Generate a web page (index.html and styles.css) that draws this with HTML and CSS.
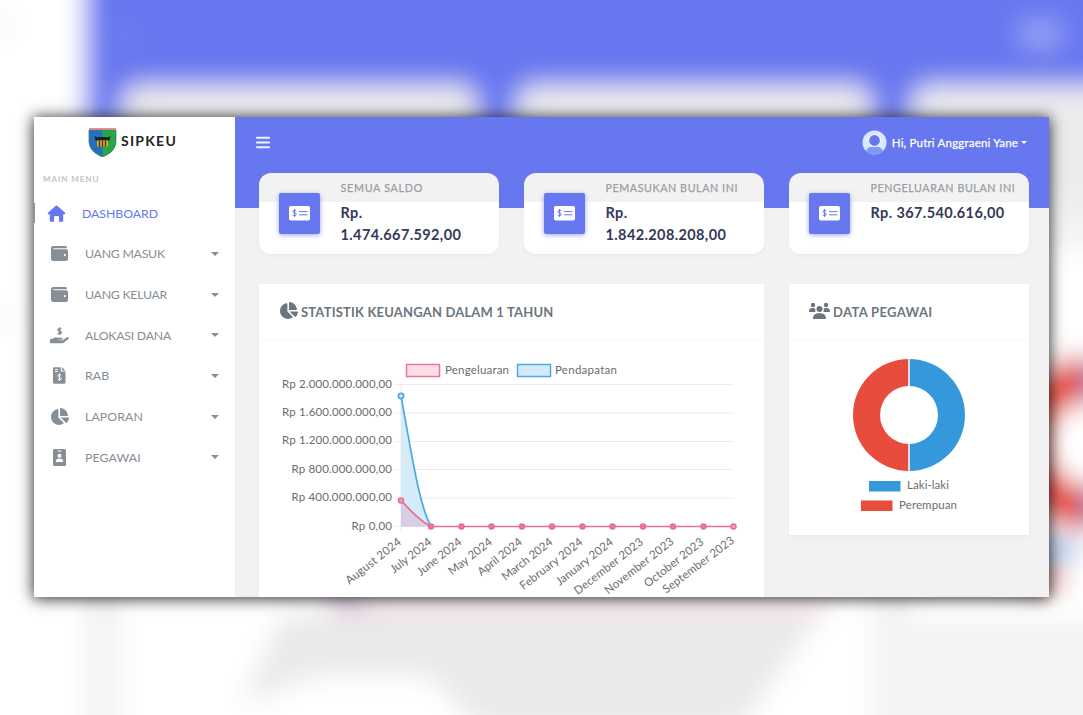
FILE: index.html
```html
<!DOCTYPE html>
<html lang="id">
<head>
<meta charset="utf-8">
<title>SIPKEU</title>
<link rel="stylesheet" href="styles.css">
</head>
<body>
<svg class="backdrop" viewBox="178 117 727 480" preserveAspectRatio="none" aria-hidden="true">
  <defs><filter id="soft" x="-10%" y="-10%" width="120%" height="120%"><feGaussianBlur stdDeviation="8.500"/></filter></defs>
  <g filter="url(#soft)">
    <rect x="100" y="50" width="900" height="620" fill="#f3f3f3"/>
    <rect x="100" y="50" width="135" height="620" fill="#fff"/>
    <rect x="235" y="50" width="800" height="158" fill="#6777ef"/>
    <rect x="260" y="174" width="238" height="81" rx="12" fill="#ececee"/>
    <rect x="525" y="174" width="238" height="81" rx="12" fill="#ececee"/>
    <rect x="790" y="174" width="240" height="81" rx="12" fill="#ececee"/>
    <rect x="259" y="284" width="505" height="400" fill="#fff"/>
    <rect x="789" y="284" width="240" height="251" fill="#fff"/>
    <path d="M863 140H890" stroke="#98a4f4" stroke-width="18"/>
    <path d="M257 142h12" stroke="#808df2" stroke-width="6"/>
    <path d="M400 526H735" stroke="#e8809b" stroke-width="3"/>
    <path d="M400 500L431 526H400z" fill="#d9c7e2"/>
    <path d="M368 530H728L675 605H500L465 570H390L340 590z" fill="#e9e9e9"/>
    <path d="M909 359a56 56 0 0 1 0 112V444a29 29 0 0 0 0-58z" fill="#3498db"/>
    <path d="M909 357a58 58 0 0 0 0 116V443a28 28 0 0 1 0-56z" fill="#e74c3c"/>
    <rect x="869" y="481" width="31.500" height="10.500" fill="#3498db"/>
    <rect x="861" y="500.500" width="31.500" height="10.500" fill="#e74c3c"/>
    <path d="M178 135h3M178 330h3" stroke="#999" stroke-width="8"/>
  </g>
</svg>

<svg class="defs" aria-hidden="true">
  <symbol id="wallet" viewBox="0 0 512 512"><path d="M461 128H80c-9 0-16-7-16-16s7-16 16-16h384c9 0 16-7 16-16 0-27-21-48-48-48H64C29 32 0 61 0 96v320c0 35 29 64 64 64h397c28 0 51-22 51-48V176c0-26-23-48-51-48zM416 336a32 32 0 1 1 0-64 32 32 0 0 1 0 64z"/></symbol>
  <symbol id="pie" viewBox="0 0 544 512"><path d="M528 288H291l158 158c6 6 16 6 22 1 39-37 65-86 73-141 1-10-7-18-16-18zm-16-65C504 104 408 8 289 0c-9-1-17 7-17 16v224h224c9 0 17-8 16-17zM224 288V51c0-10-8-17-18-16C87 51-4 156 0 280c5 129 115 234 243 232 50-1 97-17 135-44 8-6 9-17 2-24z"/></symbol>
  <symbol id="check" viewBox="0 0 21 15"><rect width="21" height="14.500" rx="1.800" fill="#fff"/><path d="M7.200 4.700C5.900 3.900 4 4.200 4 5.600c0 1.700 3.300 1 3.300 2.700 0 1.500-2.300 1.600-3.600.7M5.600 3v8M10 5.600h8.500M10 8.800h8.500" fill="none" stroke="#6777ef" stroke-width="1"/></symbol>
</svg>

<div class="panel">
  <aside class="sidebar">
    <div class="brand">
      <svg width="29" height="29" viewBox="0 0 29 29"><path d="M1 2h27v11c0 8-6 13-13.500 16C7 26 1 21 1 13z" fill="#2470bd"/><path d="M14.500 2H28v11c0 8-6 13-13.500 16z" fill="#28a745"/><path d="M1 2h27v11c0 8-6 13-13.500 16C7 26 1 21 1 13z" fill="none" stroke="#477c76" stroke-width=".8"/><path d="M1 1h27" stroke="#dd7679" stroke-width="1.600"/><path d="M6.500 8c2 1.500 4 1.500 5 1h6c1 .5 3 .5 5-1l-1 4.500h-14z" fill="#17241d"/><path d="M9 12.500h11v6H9z" fill="#d6a72e"/><path d="M11.500 12.500v6M14.500 12.500v6M17.500 12.500v6" stroke="#3d301b" stroke-width="1.200"/></svg>
      <span>SIPKEU</span>
    </div>
    <div class="menu-title">MAIN MENU</div>
    <nav>
      <a class="item active"><svg class="ico home" width="19" height="17" viewBox="0 0 20 18"><path d="M9.200.8a1.200 1.200 0 0 1 1.600 0l8 7.100c1 .9.500 2-.7 2h-1v6.400c0 .8-.6 1.400-1.400 1.400H12.600V12.600c0-.6-.4-1-1-1H8.400c-.6 0-1 .4-1 1v5.100H4.300c-.8 0-1.400-.6-1.400-1.400V9.900h-1c-1.200 0-1.700-1.100-.7-2z"/></svg><span>DASHBOARD</span></a>
      <a class="item"><svg class="ico" width="17" height="17"><use href="#wallet"/></svg><span class="tight">UANG MASUK</span><i></i></a>
      <a class="item"><svg class="ico" width="17" height="17"><use href="#wallet"/></svg><span class="tight">UANG KELUAR</span><i></i></a>
      <a class="item"><svg class="ico" width="19" height="17" viewBox="0 0 19 17"><path d="M0 12h2.500C4 10.500 6 10.300 8 10.800h3.500c1.400 0 1.200 1.900 0 1.900H8.500v.5h4l4.200-2.800c1.500-.8 2.800.5 1.700 1.600L14 15.600c-.6.5-1 .7-2 .7H0z"/><path d="M11.300 2.200C10.200 1.400 8 1.500 8 3c0 1.600 3.300.9 3.300 2.600 0 1.500-2.300 1.600-3.600.7M9.600.3v7.400" fill="none" stroke="currentColor" stroke-width="1.500"/></svg><span class="tight">ALOKASI DANA</span><i></i></a>
      <a class="item"><svg class="ico" width="13" height="17" viewBox="0 0 13 17"><path d="M1.300.3h6.500v4.200h4.700v11c0 .8-.5 1.200-1.200 1.200h-10c-.8 0-1.300-.5-1.300-1.200v-14C0 .8.500.3 1.300.3zM9 .3l3.500 3.200H9z"/><path d="M2 2.500h3M2 4.500h3M8.200 8.100C6.900 7.300 4.900 7.400 4.900 8.800c0 1.700 3.400 1.200 3.400 2.800 0 1.500-2.300 1.500-3.700.7M6.500 6.400v7.500" fill="none" stroke="#fff" stroke-width="1"/></svg><span>RAB</span><i></i></a>
      <a class="item"><svg class="ico" width="18" height="17"><use href="#pie"/></svg><span>LAPORAN</span><i></i></a>
      <a class="item"><svg class="ico" width="13" height="17" viewBox="0 0 13 17"><rect width="13" height="17" rx="1.500"/><path d="M4.500 2h4" stroke="#fff"/><circle cx="6.500" cy="6.700" r="2" fill="#fff"/><path d="M2.800 13c0-2.400 1.300-3.400 3.700-3.400s3.700 1 3.700 3.400z" fill="#fff"/></svg><span>PEGAWAI</span><i></i></a>
    </nav>
  </aside>

  <main class="main">
    <header class="topbar">
      <svg width="14" height="13" viewBox="0 0 14 13"><path d="M1 1.800h12M1 6.500h12M1 11.200h12" stroke="#eef0ff" stroke-width="2.100" stroke-linecap="round"/></svg>
      <div class="user">
        <svg width="25" height="25" viewBox="0 0 25 25"><circle cx="12.500" cy="12.500" r="12" fill="#d9e7ff"/><path d="M4 21.500c1-4 4-5 8.500-5s7.500 1 8.500 5c-5 4-12 4-17 0z" fill="#7f9af6"/><circle cx="12.500" cy="10.500" r="6" fill="#6777ef" stroke="#f0f5ff" stroke-width="1.200"/></svg>
        <span>Hi, Putri Anggraeni Yane</span><i></i>
      </div>
    </header>
    <section class="stats">
      <article class="stat"><div class="badge"><svg width="21" height="15"><use href="#check"/></svg></div><div class="info"><h4 class="l1">SEMUA SALDO</h4><p>Rp.<br>1.474.667.592,00</p></div></article>
      <article class="stat"><div class="badge"><svg width="21" height="15"><use href="#check"/></svg></div><div class="info"><h4 class="l2">PEMASUKAN BULAN INI</h4><p>Rp.<br>1.842.208.208,00</p></div></article>
      <article class="stat"><div class="badge"><svg width="21" height="15"><use href="#check"/></svg></div><div class="info"><h4 class="l3">PENGELUARAN BULAN INI</h4><p>Rp. 367.540.616,00</p></div></article>
    </section>
    <section class="charts">
      <article class="card wide">
        <h3><svg width="18" height="17"><use href="#pie"/></svg><span>STATISTIK KEUANGAN DALAM 1 TAHUN</span></h3>
        <svg class="plot" width="505" height="256" viewBox="259 341 505 256">
          <path d="M394 384.500H734M394 413H734M394 441.500H734M394 469.500H734M394 498H734M394 526.500H734M401 384V533" stroke="#ececec" fill="none"/>
          <rect x="406.500" y="364.500" width="33" height="12" fill="#ffdfe6" stroke="#e87896" stroke-width="1.500"/>
          <rect x="517.500" y="364.500" width="33" height="12" fill="#d3eafa" stroke="#4daadd" stroke-width="1.500"/>
          <g class="lab">
            <text x="445" y="374" textLength="64">Pengeluaran</text><text x="555" y="374" textLength="62">Pendapatan</text>
            <text x="282" y="387.500" textLength="110">Rp 2.000.000.000,00</text>
            <text x="282" y="415.500" textLength="110">Rp 1.600.000.000,00</text>
            <text x="282" y="444" textLength="110">Rp 1.200.000.000,00</text>
            <text x="291.500" y="472.500" textLength="100.500">Rp 800.000.000,00</text>
            <text x="291.500" y="501" textLength="100.500">Rp 400.000.000,00</text>
            <text x="351.500" y="529.500" textLength="40.500">Rp 0,00</text>
          </g>
          <path d="M401 396C412 455 419 505 431 526.500H401z" fill="#cce7f8" fill-opacity=".85"/>
          <path d="M401 396C412 455 419 505 431 526.500" fill="none" stroke="#4daadd" stroke-width="1.700"/>
          <path d="M401 500.500C411 511 420 521 431 526.500H401z" fill="#dd9fc5" fill-opacity=".4"/>
          <path d="M401 500.500C411 511 420 521 431 526.500H734" fill="none" stroke="#e3708f" stroke-width="1.700"/>
          <circle cx="401" cy="396" r="2.600" fill="#d3eafa" stroke="#4daadd" stroke-width="1.700"/>
          <g fill="#e67b97" stroke="#e3708f" stroke-width="1.500"><circle cx="401" cy="500.500" r="2.500" fill="#f0a0b4"/><circle cx="431" cy="526.500" r="2.500"/><circle cx="461.500" cy="526.500" r="2.500"/><circle cx="491.500" cy="526.500" r="2.500"/><circle cx="522" cy="526.500" r="2.500"/><circle cx="552" cy="526.500" r="2.500"/><circle cx="582.500" cy="526.500" r="2.500"/><circle cx="612.500" cy="526.500" r="2.500"/><circle cx="643" cy="526.500" r="2.500"/><circle cx="673" cy="526.500" r="2.500"/><circle cx="703.500" cy="526.500" r="2.500"/><circle cx="733.500" cy="526.500" r="2.500" fill="#f0a0b4"/></g>
          <g class="lab end">
            <text transform="translate(402 543.500) rotate(-38)" textLength="67">August 2024</text>
            <text transform="translate(432.500 543.500) rotate(-38)" textLength="49">July 2024</text>
            <text transform="translate(462.500 543.500) rotate(-38)" textLength="53">June 2024</text>
            <text transform="translate(493 543.500) rotate(-38)" textLength="52">May 2024</text>
            <text transform="translate(523 543.500) rotate(-38)" textLength="53">April 2024</text>
            <text transform="translate(553.500 543.500) rotate(-38)" textLength="61">March 2024</text>
            <text transform="translate(583.500 543.500) rotate(-38)" textLength="76">February 2024</text>
            <text transform="translate(614 543.500) rotate(-38)" textLength="69">January 2024</text>
            <text transform="translate(644 543.500) rotate(-38)" textLength="84">December 2023</text>
            <text transform="translate(674.500 543) rotate(-38)" textLength="84">November 2023</text>
            <text transform="translate(704.500 543.500) rotate(-38)" textLength="72">October 2023</text>
            <text transform="translate(735 542) rotate(-37)" textLength="86">September 2023</text>
          </g>
        </svg>
      </article>
      <article class="card staff">
        <h3><svg width="21" height="18" viewBox="0 0 21 18"><circle cx="4" cy="3" r="2.200"/><circle cx="17" cy="3" r="2.200"/><circle cx="10.500" cy="7" r="3"/><path d="M0 10c0-3 1-4 3.500-4 1.500 0 2.500.4 3 1.400-.5 1-.2 1.800.1 2.600zM21 10c0-3-1-4-3.500-4-1.500 0-2.500.4-3 1.400.5 1 .2 1.800-.1 2.600zM4 17c0-4 2-5.700 6.500-5.700S17 13 17 17z"/></svg><span>DATA PEGAWAI</span></h3>
        <svg class="plot" width="240" height="194" viewBox="789 341 240 194">
          <path d="M909 359a56 56 0 0 1 0 112V444a29 29 0 0 0 0-58z" fill="#3498db"/>
          <path d="M909 359a56 56 0 0 0 0 112V444a29 29 0 0 1 0-58z" fill="#e74c3c"/>
          <path d="M909 358V387M909 443V472" stroke="#fff" stroke-width="1.500"/>
          <rect x="869" y="481" width="31.500" height="10.500" fill="#3498db"/><rect x="861" y="500.500" width="31.500" height="10.500" fill="#e74c3c"/>
          <g class="lab"><text x="907" y="489" textLength="42">Laki-laki</text><text x="899" y="508.500" textLength="58">Perempuan</text></g>
        </svg>
      </article>
    </section>
  </main>
</div>
</body>
</html>
```
FILE: styles.css
```css
* { box-sizing: border-box; }
body { margin: 0; width: 1083px; height: 715px; overflow: hidden; padding: 117px 34px 0; font-family: Lato, "Noto Sans", sans-serif; color: #6c757d; }
h3, h4, p { margin: 0; }
svg { display: block; flex: none; fill: currentColor; }
.defs { position: absolute; width: 0; height: 0; }
.backdrop { position: absolute; left: 0; top: 0; width: 1083px; height: 715px; z-index: -1; }
.panel { display: flex; width: 1015px; height: 480px; overflow: hidden; background: #f2f2f2; box-shadow: 0 1px 14px 1px rgba(0,0,0,.8); }

.sidebar { width: 201px; flex: none; background: #fff; }
.brand { display: flex; align-items: center; gap: 4px; height: 50px; padding: 0 0 0 54px; color: #212529; font-size: 14px; font-weight: 700; letter-spacing: 1.25px; }
.brand span { margin-top: -4px; }
.menu-title { height: 26px; padding: 7px 0 0 9px; font-size: 8px; line-height: 10px; font-weight: 700; letter-spacing: .95px; color: #c0c4c8; }
.item { display: grid; grid-template-columns: 51px 1fr 8px; align-items: center; height: 40.650px; padding-right: 16px; font-size: 12.300px; letter-spacing: .1px; color: #868e96; }
.ico { margin: 0 auto; }
.item span { white-space: nowrap; }
.item .tight { letter-spacing: -.25px; }
.item i { width: 0; height: 0; border: 4px solid transparent; border-top-color: currentColor; border-bottom: 0; }
.user i { width: 0; height: 0; border: 3.500px solid transparent; border-top-color: currentColor; border-bottom: 0; }
.active { grid-template-columns: 48px 1fr; color: #6777ef; letter-spacing: -.05px; background: linear-gradient(#8d8d9b, #8d8d9b) 0 50% / 1px 20px no-repeat; }
.active .home { margin-left: 13px; }

.main { flex: 1; padding: 0 20px 0 24px; background: linear-gradient(#6777ef 91px, #f2f2f2 91px); }
.topbar { display: flex; align-items: center; justify-content: space-between; height: 56px; padding: 0 2px 5px 0; margin-left: -3px; color: #fff; }
.user { display: flex; align-items: center; gap: 5px; font-size: 11.500px; letter-spacing: .19px; white-space: nowrap; -webkit-text-stroke: .25px; }
.user i { margin-left: -2px; }

.stats { display: grid; grid-template-columns: repeat(3, 240px); gap: 25px; }
.stat { display: flex; gap: 20px; height: 81px; padding-left: 20px; border-radius: 12px; background: linear-gradient(#f2f2f2 29px, #fff 29px); box-shadow: 0 2px 4px rgba(0,0,0,.035); }
.badge { width: 41px; height: 41px; margin-top: 20px; padding: 13px 10px; border-radius: 2px; background: #6777ef; box-shadow: 0 1px 5px #9aa6f5; }
.info { padding-top: 8px; margin-left: .5px; white-space: nowrap; }
.info h4 { height: 21px; font-size: 10.700px; line-height: 13px; font-weight: 400; color: #98a0a7; -webkit-text-stroke: .25px; }
.l1 { letter-spacing: .75px; }
.l2 { letter-spacing: .6px; }
.l3 { letter-spacing: .6px; }
.info p { color: #343957; font-size: 14.500px; line-height: 21.500px; font-weight: 700; letter-spacing: .38px; }

.charts { display: grid; grid-template-columns: 505px 240px; gap: 25px; margin-top: 30px; }
.card { background: #fff; box-shadow: 0 2px 5px rgba(0,0,0,.035); }
.wide { height: 313px; }
.staff { height: 251px; }
.card h3 { display: flex; align-items: center; gap: 3px; height: 57px; padding: 0 20px 3px; border-bottom: 1px solid #f7f7f7; font-size: 13px; font-weight: 700; letter-spacing: .18px; white-space: nowrap; }
.wide h3 { padding-left: 21px; }
.card h3 span { padding-top: 2px; }
.staff h3 { letter-spacing: .35px; }
.lab { font-size: 11.500px; fill: #6c6c6c; }
.end { text-anchor: end; }
```
